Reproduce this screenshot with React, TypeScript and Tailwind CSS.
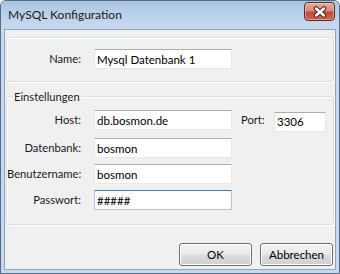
import React from "react";

const font = "font-['Lato','Liberation_Sans',sans-serif]";

/** Win7-artiges Textfeld */
function TextBox({ value, width = "w-[138px]", focused = false }: { value: string; width?: string; focused?: boolean }) {
  const border = focused
    ? "border-[#a9c6e4] border-t-[#3d7bad]"
    : "border-[#e3e9ef] border-t-[#abadb3]";
  return (
    <input
      readOnly
      value={value}
      className={`${width} h-[20px] border ${border} bg-white pl-[2px] text-[11.5px] leading-[18px] text-black outline-none`}
    />
  );
}

/** Beschriftung rechtsbündig */
function Label({ children }: { children: React.ReactNode }) {
  return <span className="w-[74px] shrink-0 text-right text-[11.2px] leading-[20px] text-[#1a1a1a]">{children}</span>;
}

function Row({ label, children }: { label: string; children: React.ReactNode }) {
  return (
    <div className="flex items-center gap-[13px]">
      <Label>{label}:</Label>
      {children}
    </div>
  );
}

function Button({ children }: { children: React.ReactNode }) {
  return (
    <button className="h-[23px] w-[73px] rounded-[3px] border border-[#707070] bg-[linear-gradient(#f2f2f2_0%,#ebebeb_48%,#dddddd_52%,#cfcfcf_100%)] text-[11.5px] text-black shadow-[inset_0_0_0_1px_#fbfbfb]">
      {children}
    </button>
  );
}

export default function App() {
  return (
    <div className={`${font} flex h-[274px] w-[340px] flex-col overflow-hidden rounded-t-[6px] border border-[#566b84] bg-[#c6d9ee]`}>
      {/* Titelleiste */}
      <div className="flex h-[28px] items-start justify-between bg-[linear-gradient(#aac5e3,#bfd4ec_60%,#c6d9ee)] pl-[7px] pr-[4px]">
        <span className="mt-[6px] text-[12px] leading-[16px] text-[#1a1a1a]">MySQL Konfiguration</span>
        <div className="mt-[1px] flex h-[19px] w-[31px] items-center justify-center rounded-[4px] border border-[#5e2a22] bg-[linear-gradient(#e9aa9a_0%,#dc8a78_45%,#c4493a_55%,#cf6a52_100%)] shadow-[inset_0_0_0_1px_rgba(255,255,255,0.35)]">
          <svg width="14" height="12" viewBox="0 0 14 12">
            <path d="M3 2.5 L11 9.5 M11 2.5 L3 9.5" stroke="#4a2a26" strokeWidth="4.5" strokeLinecap="round" />
            <path d="M3 2.5 L11 9.5 M11 2.5 L3 9.5" stroke="#ffffff" strokeWidth="2.4" strokeLinecap="round" />
          </svg>
        </div>
      </div>

      {/* Client-Bereich */}
      <div className="mx-[3px] mb-[3px] flex flex-1 flex-col border border-[#8fa5be] bg-[#f0f0f0] px-[1px]">
        {/* Name */}
        <div className="mt-[7px] rounded-[3px] border border-[#d5dfe5] pt-[11px] pb-[12px] shadow-[inset_1px_1px_0_#ffffff,1px_1px_0_#ffffff]">
          <Row label="Name">
            <TextBox value="Mysql Datenbank 1" />
          </Row>
        </div>

        {/* Einstellungen */}
        <fieldset className="mt-[7px] rounded-[3px] border border-[#d5dfe5] pt-[4px] pb-[14px] shadow-[inset_1px_1px_0_#ffffff,1px_1px_0_#ffffff]">
          <legend className="ml-[6px] px-[1px] text-[11.2px] leading-[15px] text-[#1a1a1a]">Einstellungen</legend>
          <div className="flex flex-col gap-[6px]">
            <div className="flex items-center">
              <Row label="Host">
                <TextBox value="db.bosmon.de" />
              </Row>
              <span className="ml-[9px] w-[24px] text-[11.2px] text-[#1a1a1a]">Port:</span>
              <div className="ml-[9px]">
                <TextBox value="3306" width="w-[52px]" />
              </div>
            </div>
            <Row label="Datenbank">
              <TextBox value="bosmon" />
            </Row>
            <Row label="Benutzername">
              <TextBox value="bosmon" />
            </Row>
            <Row label="Passwort">
              <TextBox value="#####" focused />
            </Row>
          </div>
        </fieldset>

        {/* Buttons */}
        <div className="mt-[18px] flex justify-end gap-[8px] pr-[1px]">
          <Button>OK</Button>
          <Button>Abbrechen</Button>
        </div>
      </div>
    </div>
  );
}
